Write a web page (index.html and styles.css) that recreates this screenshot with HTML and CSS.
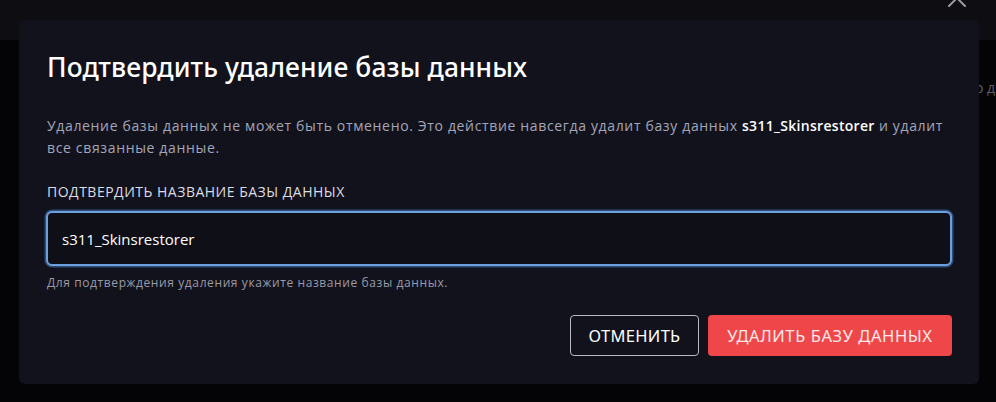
FILE: index.html
```html
<!DOCTYPE html>
<html lang="ru">
<head>
<meta charset="utf-8">
<link rel="stylesheet" href="styles.css">
</head>
<body>
<div class="page">
  <div class="topbar"></div>
  <div class="behind-text">о д</div>
  <button class="close" aria-label="Закрыть">
    <svg width="22" height="22" viewBox="0 0 22 22"><path d="M3 3 L19 19 M19 3 L3 19" stroke="#9b9ba3" stroke-width="2" stroke-linecap="round"/></svg>
  </button>
  <div class="modal">
    <h2 class="title">Подтвердить удаление базы данных</h2>
    <p class="desc">Удаление базы данных не может быть отменено. Это действие навсегда удалит базу данных <b>s311_Skinsrestorer</b> и удалит все связанные данные.</p>
    <label class="label">ПОДТВЕРДИТЬ НАЗВАНИЕ БАЗЫ ДАННЫХ</label>
    <div class="input">s311_Skinsrestorer</div>
    <p class="hint">Для подтверждения удаления укажите название базы данных.</p>
    <div class="actions">
      <button class="btn btn-cancel">ОТМЕНИТЬ</button>
      <button class="btn btn-delete">УДАЛИТЬ БАЗУ ДАННЫХ</button>
    </div>
  </div>
</div>
</body>
</html>
```
FILE: styles.css
```css
* { box-sizing: border-box; }
html, body { margin: 0; padding: 0; }
body {
  background: #040406;
  font-family: "Open Sans", "Noto Sans", sans-serif;
  width: 996px;
  height: 402px;
  overflow: hidden;
}
.page {
  position: relative;
  width: 996px;
  height: 402px;
  padding: 20px 17px 0 19px;
}
.topbar {
  position: absolute;
  left: 0; top: 0;
  width: 996px; height: 40px;
  background: #0e0d12;
}
.behind-text {
  position: absolute;
  left: 975px; top: 78px;
  font-size: 14px;
  white-space: nowrap;
  color: #5e5e66;
}
.close {
  position: absolute;
  left: 946px; top: -13px;
  background: none; border: 0; padding: 0;
  width: 22px; height: 22px;
}
.modal {
  position: relative;
  width: 960px;
  height: 364px;
  background: #12121c;
  border-radius: 6px;
  padding: 30px 28px 0 28px;
}
.title {
  margin: 0;
  font-family: "Noto Sans", sans-serif;
  font-weight: 500;
  font-size: 26.4px;
  line-height: 34px;
  color: #ffffff;
  letter-spacing: 0.1px;
}
.desc {
  margin: 31px 0 0 0;
  font-size: 14px;
  line-height: 22px;
  letter-spacing: 0.65px;
  color: #a3a6b8;
  width: 910px;
}
.desc b { color: #ffffff; font-weight: 600; letter-spacing: 0.3px; }
.label {
  display: block;
  margin-top: 24px;
  font-size: 14px;
  line-height: 18px;
  letter-spacing: 0.5px;
  color: #dcdce4;
}
.input {
  margin-top: 10px;
  margin-left: -1px;
  width: 906px;
  height: 55px;
  border: 2px solid #6d9fdc;
  box-shadow: 0 0 0 1.5px #2d4d78;
  border-radius: 6px;
  background: #0f0f17;
  padding: 0 14px;
  display: flex;
  align-items: center;
  font-size: 15px;
  color: #ffffff;
}
.hint {
  margin: 8px 0 0 0;
  font-size: 12px;
  line-height: 18px;
  letter-spacing: 0.6px;
  color: #9a9aa8;
}
.actions {
  display: flex;
  justify-content: flex-end;
  gap: 9px;
  margin-top: 23px;
  width: 905px;
}
.btn {
  height: 41px;
  border-radius: 4px;
  font-family: "Noto Sans", sans-serif;
  font-size: 16.5px;
  letter-spacing: 0.6px;
  padding: 0;
  cursor: pointer;
}
.btn-cancel {
  width: 129px;
  background: transparent;
  border: 1px solid #b9b9c0;
  color: #ffffff;
  letter-spacing: 0.3px;
}
.btn-delete {
  width: 244px;
  background: #ef4649;
  border: 0;
  color: #fde9ea;
}
```
